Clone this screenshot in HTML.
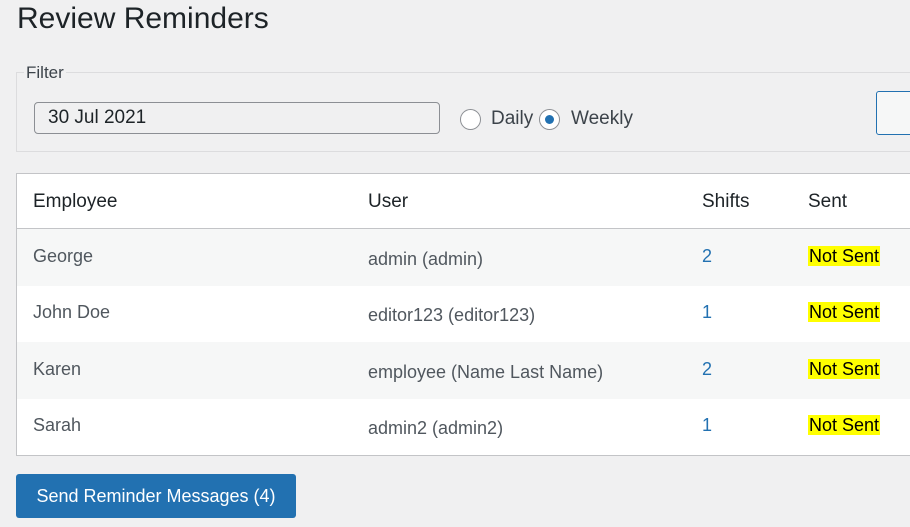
<!DOCTYPE html>
<html><head><meta charset="utf-8"><style>
body{margin:0;width:910px;height:527px;background:#f0f0f1;font-family:"Liberation Sans",sans-serif;color:#1d2327;overflow:hidden;position:relative}
.a{position:absolute;white-space:nowrap}
h1{position:absolute;left:17px;top:2px;margin:0;font-weight:400;font-size:30px;color:#1d2327}
.fs{position:absolute;left:16px;top:72px;width:900px;height:78px;border:1px solid #dcdcde;background:#f0f0f1}
.leg{position:absolute;left:24px;top:63px;font-size:17px;background:#f0f0f1;padding:0 2px;color:#3c434a}
.inp{position:absolute;left:34px;top:102px;width:404px;height:30px;border:1px solid #8c8f94;border-radius:4px;background:#f0f0f1;font-size:19px;line-height:30px;padding-left:13px;box-sizing:border-box;width:406px;height:32px}
.r{position:absolute;width:19px;height:19px;border:1px solid #8c8f94;border-radius:50%;background:#fff}
.r.on::after{content:"";position:absolute;left:5px;top:5px;width:9px;height:9px;border-radius:50%;background:#2271b1}
.btn2{position:absolute;left:876px;top:91px;width:60px;height:42px;border:1px solid #2271b1;border-radius:3px;background:#f6f7f7}
.tbl{position:absolute;left:16px;top:173px;width:900px;height:281px;border:1px solid #c3c4c7;background:#fff}
.row{position:absolute;left:0;width:900px;height:57px}
.hd{font-size:19px;color:#1d2327}
.td{font-size:18px;color:#50575e}
.lnk{color:#2271b1}
.ns{background:#ff0;color:#000;padding:0 1px}
.send{position:absolute;left:16px;top:474px;width:280px;height:44px;background:#2271b1;border-radius:3px;color:#fff;font-size:18px;line-height:44px;text-align:center}
</style></head><body>
<h1>Review Reminders</h1>
<div class="fs"></div>
<div class="a leg">Filter</div>
<div class="inp">30 Jul 2021</div>
<div class="r" style="left:460px;top:109px"></div>
<div class="a td" style="left:491px;top:108px;font-size:19px;color:#3c434a">Daily</div>
<div class="r on" style="left:539px;top:109px"></div>
<div class="a td" style="left:571px;top:108px;font-size:19px;color:#3c434a">Weekly</div>
<div class="btn2"></div>
<div class="tbl">
<div class="row" style="top:0;height:54px;border-bottom:1px solid #c3c4c7"></div>
<div class="row" style="top:55px;background:#f6f7f7"></div>
<div class="row" style="top:168px;background:#f6f7f7"></div>
</div>
<div class="a hd" style="left:33px;top:191px">Employee</div>
<div class="a hd" style="left:368px;top:191px">User</div>
<div class="a hd" style="left:702px;top:191px">Shifts</div>
<div class="a hd" style="left:808px;top:191px">Sent</div>

<div class="a td" style="left:33px;top:246px">George</div>
<div class="a td" style="left:368px;top:249px">admin (admin)</div>
<div class="a td lnk" style="left:702px;top:246px">2</div>
<div class="a td" style="left:808px;top:246px"><span class="ns">Not Sent</span></div>

<div class="a td" style="left:33px;top:302px">John Doe</div>
<div class="a td" style="left:368px;top:305px">editor123 (editor123)</div>
<div class="a td lnk" style="left:702px;top:302px">1</div>
<div class="a td" style="left:808px;top:302px"><span class="ns">Not Sent</span></div>

<div class="a td" style="left:33px;top:359px">Karen</div>
<div class="a td" style="left:368px;top:362px">employee (Name Last Name)</div>
<div class="a td lnk" style="left:702px;top:359px">2</div>
<div class="a td" style="left:808px;top:359px"><span class="ns">Not Sent</span></div>

<div class="a td" style="left:33px;top:415px">Sarah</div>
<div class="a td" style="left:368px;top:418px">admin2 (admin2)</div>
<div class="a td lnk" style="left:702px;top:415px">1</div>
<div class="a td" style="left:808px;top:415px"><span class="ns">Not Sent</span></div>

<div class="send">Send Reminder Messages (4)</div>
</body></html>
